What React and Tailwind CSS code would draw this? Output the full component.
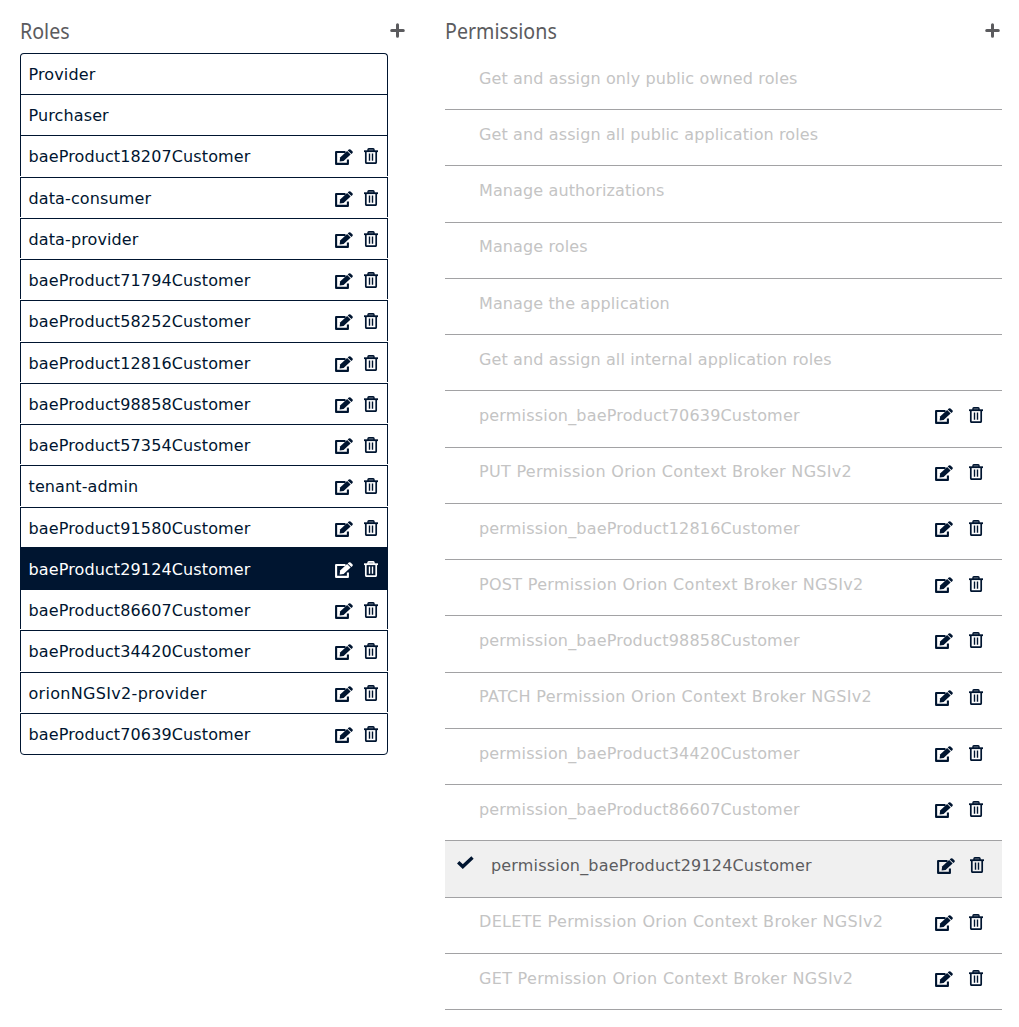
const roles = [
  "Provider", "Purchaser", "baeProduct18207Customer", "data-consumer", "data-provider",
  "baeProduct71794Customer", "baeProduct58252Customer", "baeProduct12816Customer",
  "baeProduct98858Customer", "baeProduct57354Customer", "tenant-admin",
  "baeProduct91580Customer", "baeProduct29124Customer", "baeProduct86607Customer",
  "baeProduct34420Customer", "orionNGSIv2-provider", "baeProduct70639Customer",
];
const selectedRole = "baeProduct29124Customer";

const permissions = [
  "Get and assign only public owned roles",
  "Get and assign all public application roles",
  "Manage authorizations",
  "Manage roles",
  "Manage the application",
  "Get and assign all internal application roles",
  "permission_baeProduct70639Customer",
  "PUT Permission Orion Context Broker NGSIv2",
  "permission_baeProduct12816Customer",
  "POST Permission Orion Context Broker NGSIv2",
  "permission_baeProduct98858Customer",
  "PATCH Permission Orion Context Broker NGSIv2",
  "permission_baeProduct34420Customer",
  "permission_baeProduct86607Customer",
  "permission_baeProduct29124Customer",
  "DELETE Permission Orion Context Broker NGSIv2",
  "GET Permission Orion Context Broker NGSIv2",
];
const activePermission = "permission_baeProduct29124Customer";

function tracking(name) {
  if (name.includes("NGSI")) return "tracking-[0.31px]";
  return name.includes("_") ? "tracking-[0.18px]" : "tracking-[0.12px]";
}

function EditIcon() {
  return (
    <svg width="18" height="16" viewBox="0 0 18 16" className="shrink-0" fill="none" stroke="currentColor">
      <path d="M10.5 3H1.1v11.9h11.8V10.5" strokeWidth="2.1" strokeLinejoin="round" />
      <path d="M4.6 12.6l.5-4.2 7-6.4 3.5 3.5-7 6.5z" fill="currentColor" stroke="none" />
      <path d="M12.7 1.5l1.1-1q.9-.7 1.7.1l1.9 1.7q.8.8.1 1.6l-1.1 1.1z" fill="currentColor" stroke="none" />
    </svg>
  );
}

function TrashIcon() {
  return (
    <svg width="14" height="16" viewBox="0 0 14 16" className="shrink-0" fill="none" stroke="currentColor">
      <path d="M0 3.2h14" strokeWidth="1.8" />
      <path d="M4 3V1.6q0-.8.8-.8h4.4q.8 0 .8.8V3" strokeWidth="1.4" fill="currentColor" fillOpacity=".5" />
      <path d="M1.8 3.5v10.8q0 .9.9.9h8.6q.9 0 .9-.9V3.5" strokeWidth="1.7" />
      <path d="M5.5 5.6v7.2M8.5 5.6v7.2" strokeWidth="1.4" />
    </svg>
  );
}

function PlusIcon() {
  return (
    <svg width="15" height="15" viewBox="0 0 15 15" fill="none" stroke="#5b5b5e" strokeWidth="3" strokeLinecap="round">
      <path d="M7.5 1.7v11.6M1.7 7.5h11.6" />
    </svg>
  );
}

function Heading({ children }) {
  return (
    <header className="flex h-[53px] justify-between">
      <h2 className="mt-4 origin-left scale-x-[0.935] font-['Noto_Sans',sans-serif] text-[21px] leading-[30px] font-normal text-[#5b5b5e]">{children}</h2>
      <button className="mt-[22.5px] h-[15px] w-[15px]" aria-label="Add"><PlusIcon /></button>
    </header>
  );
}

function roleRowClass(i, selected) {
  if (selected) return "-mt-px h-[42.25px] bg-[#001530] pt-px text-white";
  if (i === 0) return "h-[41.25px] rounded-t";
  if (i === 1) return "h-[41.25px]";
  if (i === roles.length - 1) return "h-[42px] rounded-b border-b";
  return "mb-px h-[40.25px]";
}

export default function App() {
  return (
    <main className="flex h-[1027px] items-start bg-white pl-5 font-['DejaVu_Sans',sans-serif] text-base text-[#001530]">
      <section className="w-[385px]">
        <Heading>Roles</Heading>
        <ul className="-mt-[0.1px] w-[368px]">
          {roles.map((name, i) => (
            <li
              key={name}
              className={`flex items-start border-x border-t border-[#001530] pr-[9px] pl-[7.5px] ${roleRowClass(i, name === selectedRole)}`}
            >
              <span className={`mt-[9px] flex-1 leading-6 whitespace-nowrap ${tracking(name)}`}>{name}</span>
              {i > 1 && (
                <span className="mt-3 flex items-start gap-[11px]">
                  <span className="mt-px"><EditIcon /></span><TrashIcon />
                </span>
              )}
            </li>
          ))}
        </ul>
      </section>
      <section className="ml-10 w-[557px]">
        <div className="pr-[2.5px]"><Heading>Permissions</Heading></div>
        <ul className="pt-[0.85px]">
          {permissions.map((name, i) => {
            const active = name === activePermission;
            return (
              <li
                key={name}
                className={`flex h-[56.25px] items-start border-b border-[#a2a2a4] ${active ? "bg-[#f0f0f0] pr-[18px] pl-3 text-[#5c5c5f]" : "pr-[19px] pl-[34px] text-[#c4c4c4]"}`}
              >
                {active && (
                  <svg width="17" height="13" viewBox="0 0 17 13" className="mt-[15px] mr-[17px]" fill="none" stroke="#001530" strokeWidth="3.4">
                    <path d="M1.2 6.2l4.6 4.4L15.5 1.5" />
                  </svg>
                )}
                <span className={`mt-[12.8px] flex-1 leading-6 whitespace-nowrap ${tracking(name)}`}>{name}</span>
                {i > 5 && (
                  <span className={`mt-4 flex items-start text-[#001530] ${active ? "gap-[15px]" : "gap-4"}`}>
                    <span className="mt-px"><EditIcon /></span><TrashIcon />
                  </span>
                )}
              </li>
            );
          })}
        </ul>
      </section>
    </main>
  );
}
